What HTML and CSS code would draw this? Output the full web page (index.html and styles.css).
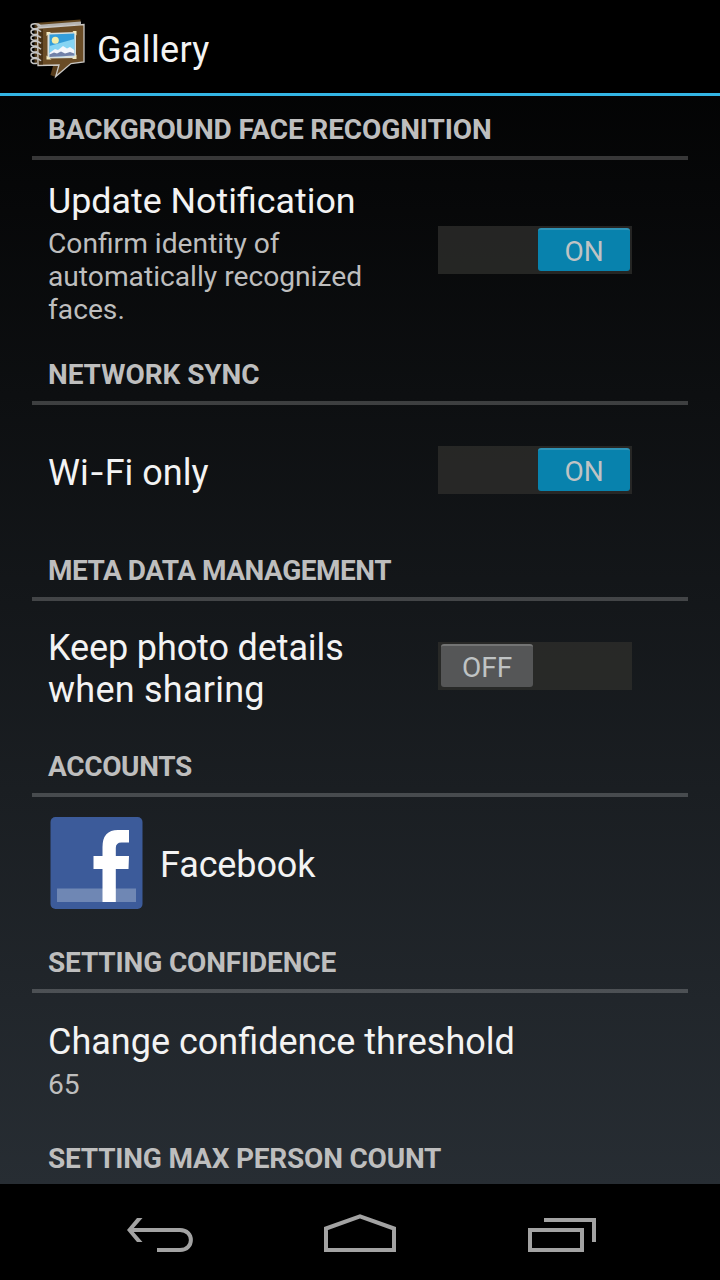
FILE: index.html
```
<!DOCTYPE html>
<html lang="en">
<head>
<meta charset="utf-8">
<title>Gallery</title>
<link rel="stylesheet" href="styles.css">
</head>
<body>
<div class="screen">
  <header class="action-bar">
    <svg class="app-icon" viewBox="20 10 75 75" width="75" height="75">
      <path d="M34.500 23 80.500 19.500v5l-44 4z" fill="#60451f"/>
      <path d="M36 25 81 21.500v3L38 28z" fill="#b5b3b0"/>
      <path d="M34.500 23.500V63l3.500 2V27z" fill="#4d3616"/>
      <path d="M53 66 50.500 75 55.500 77 60 65z" fill="#573c1b"/>
      <path d="M37.500 28 84 24.500V62L71 63.500 55.700 76.500 59 65 38 65.500z" fill="#6a4c26" stroke="#c9c7c4" stroke-width="1.300"/>
      <path d="M39 29.500 43 29V64.500H39z" fill="#473116"/>
      <path d="M47.500 33 76 32V58L47.500 58.500z" fill="#d9dfdc"/>
      <path d="M49.500 34.500 74.300 33.500V55.500L49.500 57z" fill="#339dda"/>
      <path d="M49.500 46 74.300 39V55.500L49.500 57z" fill="#86d4f3"/>
      <path d="M49.500 53 55 49 58 50 63 46 67 48.500 70 47 74.300 50V55.500L49.500 57z" fill="#f4f7fc"/>
      <path d="M49.500 54.500 54 52.500 57 53.500 61 51.500 65 53.500 70 52 74.300 53.500V55.500L49.500 57z" fill="#7181a8"/>
      <circle cx="55.300" cy="40.300" r="3.500" fill="#f2edaa"/>
      <path d="M46.500 32h4.500l-4.500 4zM72.500 31h4v4.500zM76.500 54.500v4.500h-4.500zM46.500 55.500v4h5z" fill="#f3ebc2"/>
      <g fill="none" stroke="#c5c5c5" stroke-width="1.500">
        <path d="M41 26c-3-3-10-3-10 .3 0 2.200 2.500 2.700 6 2.200M41 31.800c-3-3-10-3-10 .3 0 2.200 2.500 2.700 6 2.200M41 37.600c-3-3-10-3-10 .3 0 2.200 2.500 2.700 6 2.200M41 43.400c-3-3-10-3-10 .3 0 2.200 2.500 2.700 6 2.200M41 49.200c-3-3-10-3-10 .3 0 2.200 2.500 2.700 6 2.200M41 55c-3-3-10-3-10 .3 0 2.200 2.500 2.700 6 2.200M41 60.800c-3-3-10-3-10 .3 0 2.200 2.500 2.700 6 2.200"/>
      </g>
    </svg>
    <h1 class="bar-title">Gallery</h1>
  </header>

  <main class="settings">
    <h2 class="section s-face">BACKGROUND FACE RECOGNITION</h2>
    <div class="row row-tall">
      <div class="label">
        <div class="title t-update">Update Notification</div>
        <div class="summary">Confirm identity of automatically recognized faces.</div>
      </div>
      <div class="switch"><span class="thumb on">ON</span></div>
    </div>

    <h2 class="section s-network">NETWORK SYNC</h2>
    <div class="row">
      <div class="label"><div class="title">Wi<span class="hyphen">-</span>Fi only</div></div>
      <div class="switch"><span class="thumb on">ON</span></div>
    </div>

    <h2 class="section s-meta">META DATA MANAGEMENT</h2>
    <div class="row">
      <div class="label"><div class="title"><span class="tight">Keep photo details</span> <span class="loose">when sharing</span></div></div>
      <div class="switch"><span class="thumb off">OFF</span></div>
    </div>

    <h2 class="section s-accounts">ACCOUNTS</h2>
    <div class="row account">
      <svg class="fb" viewBox="0 0 96 96" width="96" height="96">
        <rect x="2.500" y="1" width="92" height="92" rx="5" fill="#3c5b9a"/>
        <rect x="9" y="72.500" width="79" height="13.500" fill="#6f87b4"/>
        <path d="M54.500 86V53H45.500V40H54.500V31Q54.500 14 70 14H81V26.500H73.500Q67.800 26.500 67.800 32V40H81L80.500 53H67.800V86z" fill="#fff"/>
      </svg>
      <div class="title tight">Facebook</div>
    </div>

    <h2 class="section s-confidence">SETTING CONFIDENCE</h2>
    <div class="row row-threshold">
      <div>
        <div class="title">Change confidence threshold</div>
        <div class="summary">65</div>
      </div>
    </div>

    <h2 class="section s-count">SETTING MAX PERSON COUNT</h2>
  </main>

  <nav class="nav-bar">
    <svg viewBox="0 0 720 96" width="720" height="96" fill="none" stroke="#a3a3a3" stroke-width="4">
      <path d="M131 46H180C194.500 46 194.500 66 180 66H157"/>
      <path d="M137 34H142.500L132 46 142.500 58H137L127 46z" fill="#a3a3a3" stroke="none"/>
      <path d="M326 66V44.500L360 32.300 394 44.500V66z"/>
      <path d="M530 46H582V66H530zM544 36H594V58"/>
    </svg>
  </nav>
</div>
</body>
</html>
```
FILE: styles.css
```
* { box-sizing: border-box; }
body { margin: 0; background: #000; }
.screen {
  width: 720px;
  height: 1280px;
  display: flex;
  flex-direction: column;
  overflow: hidden;
  font-family: Roboto, "Liberation Sans", sans-serif;
  color: #f3f3f3;
  background: linear-gradient(#000 0, #272d33 1184px);
}
.action-bar {
  flex: none;
  height: 96px;
  display: flex;
  align-items: flex-start;
  padding: 10px 0 0 20px;
  background: #000;
  border-bottom: 3px solid #33b5e5;
}
.bar-title {
  margin: 19px 0 0 2px;
  font-size: 36px;
  line-height: 42px;
  font-weight: 400;
  letter-spacing: 0.35px;
}
.settings {
  flex: 1;
  min-height: 0;
  overflow: hidden;
  padding: 0 32px;
}
.section {
  margin: 0;
  height: 64px;
  padding: 17px 16px 0;
  border-bottom: 4px solid rgba(255, 255, 255, 0.2);
  font-size: 28px;
  line-height: 33px;
  font-weight: 700;
  color: #bebebe;
  white-space: nowrap;
}
.s-face { letter-spacing: -0.12px; }
.s-network { letter-spacing: -0.08px; }
.s-meta { letter-spacing: -0.49px; }
.s-accounts { letter-spacing: -0.36px; }
.s-confidence { letter-spacing: -0.16px; }
.s-count { letter-spacing: -0.21px; }
.row {
  height: 132px;
  padding: 4px 56px 0 16px;
  display: flex;
  align-items: center;
  justify-content: space-between;
}
.row-tall { height: 181px; padding-top: 5px; }
.row-threshold { padding-top: 3px; }
.label { width: 330px; }
.title { font-size: 36px; line-height: 42px; }
.t-update { font-size: 35.8px; }
.tight { letter-spacing: -0.12px; }
.loose { letter-spacing: 0.25px; }
.hyphen {
  display: inline-block;
  width: 16px;
  text-align: center;
  transform: scaleX(1.25);
}
.summary {
  margin-top: 5px;
  font-size: 28.2px;
  line-height: 33px;
  color: #bebebe;
}
.switch {
  width: 194px;
  height: 48px;
  margin-bottom: 6px;
  padding: 2px;
  display: flex;
  background: rgba(45, 45, 43, 0.8);
}
.thumb {
  width: 92px;
  height: 43px;
  border-radius: 3px;
  border-top: 2px solid;
  font-size: 28px;
  line-height: 43px;
  text-align: center;
  color: #bfc3c4;
}
.on { margin-left: auto; background: #0882ad; border-color: #2f93b6; }
.off { margin-left: 1px; background: #555657; border-color: #737474; }
.account { justify-content: flex-start; gap: 16px; }
.fb { margin-bottom: 2px; }
.nav-bar { flex: none; height: 96px; background: #000; }
.nav-bar svg { display: block; }
```
